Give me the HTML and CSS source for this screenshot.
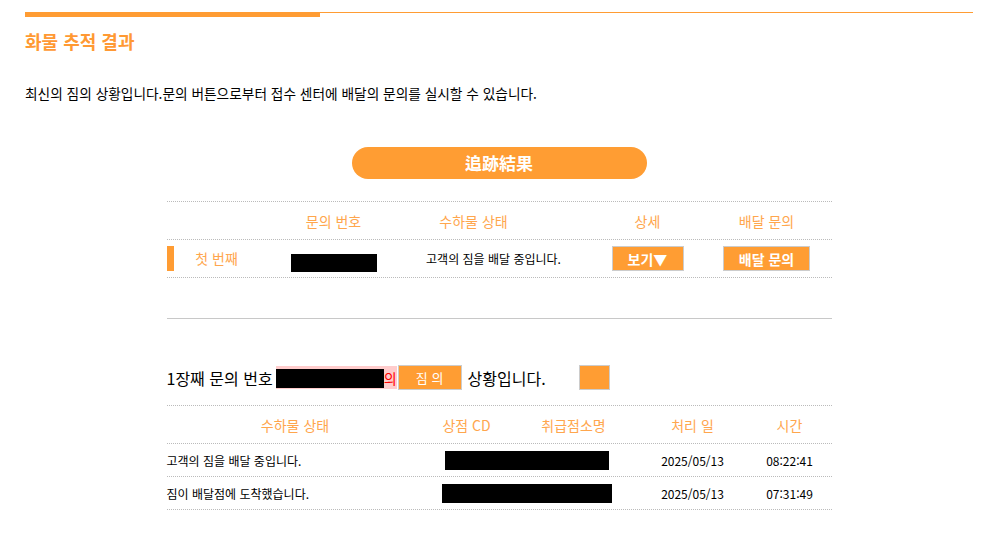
FILE: index.html
```html
<!DOCTYPE html>
<html lang="ko">
<head>
  <meta charset="UTF-8">
  <title>화물 추적 결과</title>
  <link rel="stylesheet" href="styles.css">
</head>
<body>
<main class="page">
  <div class="page-rule"><span class="page-rule__bar"></span></div>
  <h1 class="title">화물 추적 결과</h1>
  <p class="intro">최신의 짐의 상황입니다.문의 버튼으로부터 접수 센터에 배달의 문의를 실시할 수 있습니다.</p>

  <div class="pill">追跡結果</div>

  <section class="list">
    <div class="list__row list__row--head">
      <span></span>
      <span>문의 번호</span>
      <span class="shift">수하물 상태</span>
      <span>상세</span>
      <span>배달 문의</span>
    </div>
    <div class="list__row">
      <span class="nth">첫 번째</span>
      <span><i class="mask mask--num"></i></span>
      <span class="status">고객의 짐을 배달 중입니다.</span>
      <span><button class="btn btn--view">보기▼</button></span>
      <span><button class="btn btn--ask">배달 문의</button></span>
    </div>
  </section>

  <hr class="divider">

  <div class="detail-line">
    <span>1장째 문의 번호</span>
    <span class="hl"><i class="mask mask--hl"></i>의</span>
    <button class="btn btn--jim">짐 의</button>
    <span class="after">상황입니다.</span>
    <span class="square"></span>
  </div>

  <section class="history">
    <div class="history__row history__row--head">
      <span>수하물 상태</span>
      <span>상점 CD</span>
      <span>취급점소명</span>
      <span>처리 일</span>
      <span>시간</span>
    </div>
    <div class="history__row">
      <span class="left">고객의 짐을 배달 중입니다.</span>
      <span class="span2"><i class="mask mask--shop1"></i></span>
      <span>2025/05/13</span>
      <span>08:22:41</span>
    </div>
    <div class="history__row">
      <span class="left">짐이 배달점에 도착했습니다.</span>
      <span class="span2"><i class="mask mask--shop2"></i></span>
      <span>2025/05/13</span>
      <span>07:31:49</span>
    </div>
  </section>
</main>
</body>
</html>
```

FILE: styles.css
```css
body {
  margin: 0;
  background: #fff;
  color: #000;
  font-family: "Noto Sans CJK KR", "Noto Sans", sans-serif;
}

.page {
  padding: 12px 28px 0 25px;
}

.page-rule {
  border-top: 1px solid #ff9c33;
  height: 4px;
}

.page-rule__bar {
  display: block;
  width: 295px;
  height: 5px;
  margin-top: -1px;
  background: #ff9c33;
}

.title {
  margin: 12px 0 0;
  font-size: 18px;
  line-height: 24px;
  font-weight: bold;
  color: #ff9933;
}

.intro {
  margin: 30px 0 0;
  font-size: 13.7px;
  line-height: 20px;
}

.pill {
  width: 295px;
  height: 32px;
  margin: 44px auto 0;
  border-radius: 16px;
  background: #ff9d33;
  color: #fff;
  font-size: 17px;
  font-weight: bold;
  line-height: 32px;
  text-align: center;
}

.list {
  width: 665px;
  margin: 22px auto 0;
  border-top: 1px dotted #bbb;
}

.list__row {
  display: grid;
  grid-template-columns: 100px 134px 186px 122px 116px 1fr;
  align-items: center;
  height: 37px;
  border-bottom: 1px dotted #bbb;
  text-align: center;
  font-size: 12px;
}

.list__row--head {
  color: #ffa64d;
  font-size: 14px;
}

.shift {
  padding-right: 40px;
}

.nth {
  color: #ffa64d;
  font-size: 14px;
  position: relative;
  height: 25px;
  line-height: 25px;
}

.nth::before {
  content: "";
  position: absolute;
  left: 0;
  top: 0;
  width: 7px;
  height: 25px;
  background: #ff9c33;
}

.mask {
  display: inline-block;
  background: #000;
  vertical-align: middle;
}

.mask--num {
  width: 86px;
  height: 18px;
  margin-top: 8px;
}

.btn {
  font-family: inherit;
  background: #ff9d33;
  color: #fff;
  border: 1px solid #ccc;
  font-weight: bold;
  font-size: 14px;
  padding: 0;
  height: 25px;
  line-height: 22px;
  cursor: pointer;
}

.btn--view {
  width: 72px;
}

.btn--ask {
  width: 87px;
}

.divider {
  width: 665px;
  margin: 40px auto 0;
  border: 0;
  border-top: 1px solid #c8c8c8;
}

.detail-line {
  width: 665px;
  margin: 46px auto 0;
  display: flex;
  align-items: center;
  font-size: 16px;
  height: 25px;
}

.hl {
  display: inline-flex;
  align-items: center;
  height: 23px;
  margin-left: 3px;
  background: #ffcccc;
  color: #f00;
  font-size: 14px;
}

.mask--hl {
  width: 108px;
  height: 19px;
  margin-top: 2px;
}

.btn--jim {
  width: 64px;
  font-size: 13px;
  font-weight: normal;
  margin-left: 1px;
}

.after {
  margin-left: 6px;
}

.square {
  display: inline-block;
  width: 31px;
  height: 25px;
  margin-left: 33px;
  background: #ff9d33;
  border: 1px solid #ccc;
  box-sizing: border-box;
}

.history {
  width: 665px;
  margin: 15px auto 0;
  border-top: 1px dotted #bbb;
}

.history__row {
  display: grid;
  grid-template-columns: 257px 86px 128px 110px 84px;
  align-items: center;
  height: 32px;
  border-bottom: 1px dotted #bbb;
  text-align: center;
  font-size: 12px;
}

.history__row--head {
  height: 37px;
  color: #ffa64d;
  font-size: 14px;
}

.left {
  text-align: left;
}

.span2 {
  grid-column: span 2;
}

.mask--shop1 {
  width: 164px;
  height: 19px;
  margin-left: -8px;
}

.mask--shop2 {
  width: 170px;
  height: 19px;
  margin-left: -8px;
}
```
